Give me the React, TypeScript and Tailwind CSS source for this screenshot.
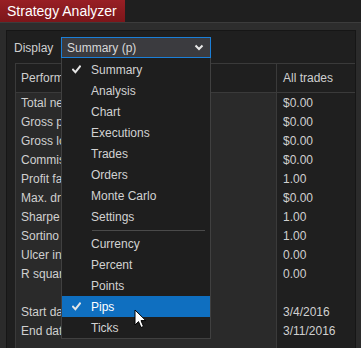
import React from "react";

const rows: [string, string][] = [
  ["Total net profit", "$0.00"],
  ["Gross profit", "$0.00"],
  ["Gross loss", "$0.00"],
  ["Commission", "$0.00"],
  ["Profit factor", "1.00"],
  ["Max. drawdown", "$0.00"],
  ["Sharpe ratio", "1.00"],
  ["Sortino ratio", "1.00"],
  ["Ulcer index", "0.00"],
  ["R squared", "0.00"],
  ["", ""],
  ["Start date", "3/4/2016"],
  ["End date", "3/11/2016"],
  ["", ""],
];

const menuA = ["Summary", "Analysis", "Chart", "Executions", "Trades", "Orders", "Monte Carlo", "Settings"];
const menuB = ["Currency", "Percent", "Points", "Pips", "Ticks"];

function Check() {
  return (
    <svg width="9" height="9" viewBox="0 0 9 9" className="absolute left-[10px] top-[6px]">
      <path d="M1 4.6 L3.4 7.2 L8 1.4" fill="none" stroke="#e6e6e6" strokeWidth="2" strokeLinecap="square" />
    </svg>
  );
}

function Item({ label, checked, active }: { label: string; checked?: boolean; active?: boolean }) {
  return (
    <div className={`relative h-[21px] flex items-center pl-[29px] ${active ? "bg-[#0f6fc0] text-white" : "text-[#d2d2d2]"}`}>
      {checked && <Check />}
      {label}
    </div>
  );
}

export default function App() {
  return (
    <div className="relative w-[361px] h-[348px] overflow-hidden bg-[#2b2b2b] text-[12px] leading-none text-[#d0d0d0] font-['Liberation_Sans',Arial,sans-serif]">
      {/* title bar */}
      <div className="flex h-[22px] bg-[#1f1f1f]">
        <div className="w-[125px] h-[22px] flex items-center pl-[7px] text-[14px] text-white bg-gradient-to-b from-[#981f25] to-[#7c161a]">
          Strategy Analyzer
        </div>
      </div>
      <div className="h-px bg-[#3c3c3c]" />
      <div className="h-[7px] bg-[#2d2d2d]" />
      {/* body */}
      <div className="flex h-[318px]">
        <div className="w-[6px]" />
        <div className="flex-1 flex flex-col bg-[#1f1f1f] border-t border-l border-r border-[#161616] pl-[7px] pt-[6px]">
          <div className="flex items-center h-[21px]">
            <span className="w-[47px]">Display</span>
            <div className="w-[150px] h-[21px] border border-[#1b7fd8] bg-[#3b3b3f] flex items-center pl-[5px] pr-[6px] justify-between text-[#d8d8d8]">
              <span>Summary (p)</span>
              <svg width="10" height="7" viewBox="0 0 10 7">
                <path d="M1.5 1.5 L5 5 L8.5 1.5" fill="none" stroke="#e8e8e8" strokeWidth="2" />
              </svg>
            </div>
          </div>
          <div className="ml-[1px] mt-[5px] flex-1 border-t border-l border-[#3a3a3a] flex flex-col">
            <div className="flex h-[29px] border-b border-[#3a3a3a]">
              <div className="w-[261px] border-r border-[#3a3a3a] flex items-center pl-[5px]">Performance</div>
              <div className="flex-1 flex items-center pl-[6px]">All trades</div>
            </div>
            <div className="flex flex-1">
              <div className="w-[261px] border-r border-[#3a3a3a] bg-[#2a2a2a] flex flex-col">
                {rows.map(([l], i) => (
                  <div key={i} className="h-[19px] flex items-center pl-[5px]">{l}</div>
                ))}
              </div>
              <div className="flex-1 flex flex-col">
                {rows.map(([, v], i) => (
                  <div key={i} className="h-[19px] flex items-center pl-[6px]">{v}</div>
                ))}
              </div>
            </div>
          </div>
        </div>
        <div className="w-[5px]" />
      </div>

      {/* dropdown menu */}
      <div className="absolute left-[61px] top-[58px] w-[150px] bg-[#1e1e1e] border-l border-r border-b border-[#404040] flex flex-col pt-px">
        {menuA.map((m, i) => (
          <Item key={m} label={m} checked={i === 0} />
        ))}
        <div className="h-[6px] flex items-center pl-[30px] pr-[5px]">
          <div className="h-px w-full bg-[#4a4a4a]" />
        </div>
        {menuB.map((m) => (
          <Item key={m} label={m} checked={m === "Pips"} active={m === "Pips"} />
        ))}
      </div>

      {/* mouse cursor */}
      <svg className="absolute left-[134px] top-[309px]" width="14" height="20" viewBox="0 0 14 20">
        <path d="M1 1 L1 16 L4.5 12.6 L7 18.5 L9.5 17.4 L7 11.6 L11.8 11.6 Z" fill="#ffffff" stroke="#000000" strokeWidth="1" strokeLinejoin="miter" />
      </svg>
    </div>
  );
}
